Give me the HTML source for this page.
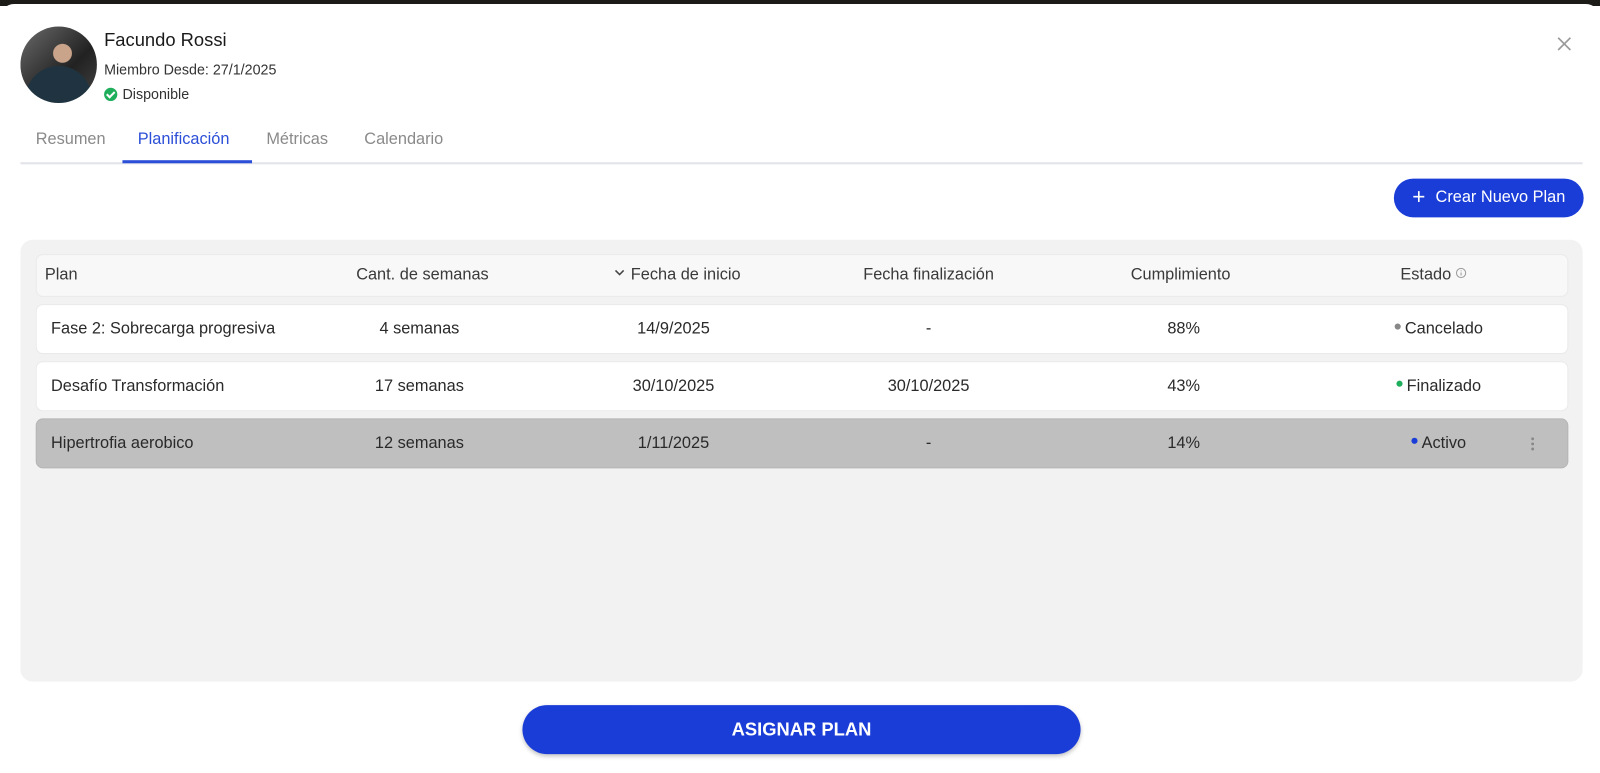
<!DOCTYPE html>
<html><head><meta charset="utf-8"><style>
*{margin:0;padding:0;box-sizing:border-box}
body{width:1600px;height:773px;background:#fff;font-family:"Liberation Sans",Arial,sans-serif;position:relative;overflow:hidden;color:#222}
.top{position:absolute;left:0;top:0;width:1600px;height:6px;background:#1d1b18}
.wrap{position:absolute;left:0;top:0;width:1568px;height:758px;transform:scale(1.0204);transform-origin:0 0}
.modal{position:absolute;left:0;top:4px;width:1568px;height:760px;background:#fff;border-radius:14px 14px 0 0}
.abs{position:absolute}
.avatar{left:20px;top:26px;width:75px;height:75px;border-radius:50%;background:radial-gradient(circle at 55% 35%,#c9a38a 0 14%,transparent 15%),radial-gradient(circle at 50% 95%,#1f3440 0 40%,transparent 41%),linear-gradient(135deg,#6b6b6b,#222 60%,#444)}
.name{left:102px;top:29px;font-size:18px;color:#1a1a1a}
.since{left:102px;top:60px;font-size:14px;color:#333}
.disp{left:102px;top:84px;font-size:14px;color:#333;display:flex;align-items:center;gap:5px}
.chk{width:13px;height:13px;border-radius:50%;background:#1fae5b;display:inline-block;position:relative}
.chk:after{content:"";position:absolute;left:4px;top:2px;width:3px;height:6px;border:solid #fff;border-width:0 2px 2px 0;transform:rotate(45deg)}
.tab{top:128px;font-size:16px;color:#8a8a8a}
.tabline{left:20px;top:159px;width:1531px;height:2px;background:#e2e4ea}
.tabact{left:120px;top:157px;width:127px;height:3px;background:#2c4fd8}
.btn{left:1366px;top:175px;width:186px;height:38px;border-radius:19px;background:#1a3dd8;color:#fff;font-size:16px;display:flex;align-items:center;justify-content:center;gap:10px}
.panel{left:20px;top:235px;width:1531px;height:433px;background:#f2f2f2;border-radius:12px}
.row{left:36px;width:1500px;height:47px;border-radius:6px;background:#fff;box-shadow:0 0 0 1px #eaeaea;font-size:16px;color:#2a2a2a}
.hdr{top:250px;height:40px;background:#f8f8f8;color:#3a3a3a;font-size:16px}
.c{position:absolute;top:50%;transform:translate(-50%,-50%);white-space:nowrap}
.l{position:absolute;top:50%;transform:translateY(-50%);white-space:nowrap}
.dot{display:inline-block;width:6px;height:6px;border-radius:50%;margin-right:4px;vertical-align:middle;position:relative;top:-2px}
.assign{left:512px;top:691px;width:547px;height:48px;border-radius:24px;background:#1a3dd8;color:#fff;font-weight:bold;font-size:18px;display:flex;align-items:center;justify-content:center;box-shadow:0 2px 4px rgba(0,0,0,.25)}
</style></head><body>
<div class="top"></div>
<div class="abs" style="left:0;top:4px;width:1600px;height:769px;background:#fff;border-radius:14px 14px 0 0"></div>
<div class="wrap">
<div class="abs avatar"></div>
<div class="abs name">Facundo Rossi</div>
<div class="abs since">Miembro Desde: 27/1/2025</div>
<div class="abs disp"><span class="chk"></span>Disponible</div>
<svg class="abs" style="left:1526px;top:36px" width="14" height="14"><path d="M1 1L13 13M13 1L1 13" stroke="#9a9a9a" stroke-width="1.6"/></svg>
<div class="abs tab" style="left:35px">Resumen</div>
<div class="abs tab" style="left:135px;color:#2c4fd8">Planificación</div>
<div class="abs tab" style="left:261px">Métricas</div>
<div class="abs tab" style="left:357px">Calendario</div>
<div class="abs tabline"></div><div class="abs tabact"></div>
<div class="abs btn"><span style="font-size:22px;line-height:1;margin-top:-3px">+</span>Crear Nuevo Plan</div>
<div class="abs panel"></div>
<div class="abs row hdr"><span class="l" style="left:8px">Plan</span><span class="c" style="left:378px">Cant. de semanas</span><span class="c" style="left:628px"><svg width="10" height="7" style="margin-right:6px;vertical-align:middle;position:relative;top:-2px"><path d="M1 1L5 5L9 1" stroke="#444" stroke-width="1.5" fill="none"/></svg>Fecha de inicio</span><span class="c" style="left:874px">Fecha finalización</span><span class="c" style="left:1121px">Cumplimiento</span><span class="c" style="left:1369px">Estado <svg width="11" height="11" style="vertical-align:middle;position:relative;top:-2px"><circle cx="5.5" cy="5.5" r="4.5" stroke="#999" fill="none"/><path d="M5.5 5v3M5.5 3v.8" stroke="#999"/></svg></span></div>
<div class="abs row" style="top:299px"><span class="l" style="left:14px">Fase 2: Sobrecarga progresiva</span><span class="c" style="left:375px">4 semanas</span><span class="c" style="left:624px">14/9/2025</span><span class="c" style="left:874px">-</span><span class="c" style="left:1124px">88%</span><span class="c" style="left:1374px"><span class="dot" style="background:#888"></span>Cancelado</span></div>
<div class="abs row" style="top:355px"><span class="l" style="left:14px">Desafío Transformación</span><span class="c" style="left:375px">17 semanas</span><span class="c" style="left:624px">30/10/2025</span><span class="c" style="left:874px">30/10/2025</span><span class="c" style="left:1124px">43%</span><span class="c" style="left:1374px"><span class="dot" style="background:#1fae5b"></span>Finalizado</span></div>
<div class="abs row" style="top:411px;background:#bfbfbf;box-shadow:0 0 0 1px #b5b5b5"><span class="l" style="left:14px">Hipertrofia aerobico</span><span class="c" style="left:375px">12 semanas</span><span class="c" style="left:624px">1/11/2025</span><span class="c" style="left:874px">-</span><span class="c" style="left:1124px">14%</span><span class="c" style="left:1374px"><span class="dot" style="background:#1a3dd8"></span>Activo</span><svg class="l" style="left:1464px" width="4" height="14"><circle cx="2" cy="2" r="1.4" fill="#888"/><circle cx="2" cy="7" r="1.4" fill="#888"/><circle cx="2" cy="12" r="1.4" fill="#888"/></svg></div>
<div class="abs assign">ASIGNAR PLAN</div>
</div>
</body></html>
